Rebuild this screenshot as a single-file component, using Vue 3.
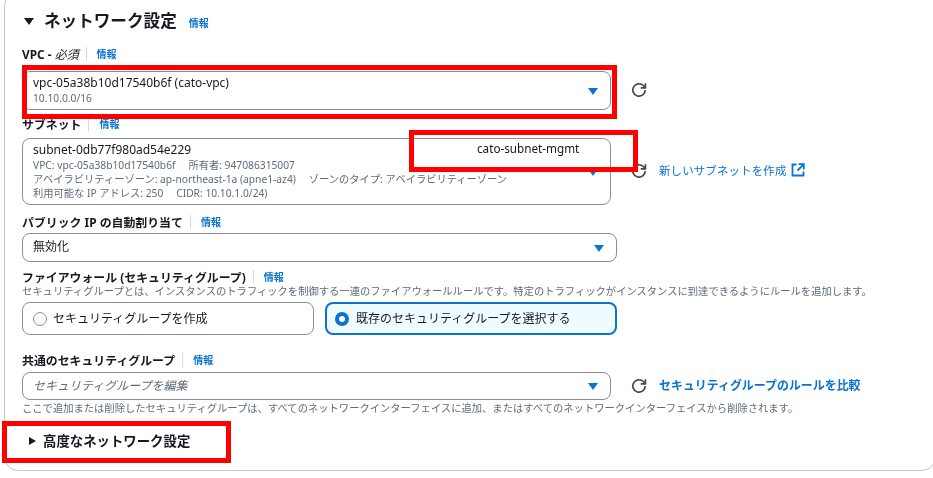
<script setup>
const subnetLines = [
  'VPC: vpc-05a38b10d17540b6f\u2003 所有者: 947086315007',
  'アベイラビリティーゾーン: ap-northeast-1a (apne1-az4)\u2003 ゾーンのタイプ: アベイラビリティーゾーン',
  '利用可能な IP アドレス: 250\u2003 CIDR: 10.10.1.0/24)'
]
const refreshArc = 'M14.2 8a6.2 6.2 0 1 1-1.9-4.5L14 5.2'
const refreshHead = 'M14.4 1.2v4.7H9.7'
</script>

<template>
  <div class="page">
    <section class="card">
      <header class="heading">
        <span class="tri-down"></span>
        <h2>ネットワーク設定</h2>
        <a class="info head-info">情報</a>
      </header>

      <div class="label vpc-label"><b>VPC - <i>必須</i></b><span class="sep"></span><a class="info">情報</a></div>
      <div class="row vpc-row">
        <div class="select vpc-select">
          <div class="main">vpc-05a38b10d17540b6f (cato-vpc)</div>
          <div class="sub">10.10.0.0/16</div>
          <span class="arrow"></span>
        </div>
        <svg class="refresh" viewBox="0 0 16 16"><path :d="refreshArc" /><path :d="refreshHead" /></svg>
      </div>

      <div class="label subnet-label"><b>サブネット</b><span class="sep"></span><a class="info">情報</a></div>
      <div class="row subnet-row">
        <div class="select subnet-select">
          <div class="main">subnet-0db77f980ad54e229</div>
          <div v-for="line in subnetLines" :key="line" class="sub">{{ line }}</div>
          <span class="arrow"></span>
        </div>
        <svg class="refresh" viewBox="0 0 16 16"><path :d="refreshArc" /><path :d="refreshHead" /></svg>
        <a class="link">新しいサブネットを作成
          <svg class="ext" viewBox="0 0 14 14"><path d="M5.5 1.5H1.5v11h11V8.5" /><path d="M7.5 1.2h5.3v5.3" /><path d="M12.5 1.5 6.5 7.5" /></svg>
        </a>
      </div>

      <div class="label ip-label"><b>パブリック IP の自動割り当て</b><span class="sep"></span><a class="info">情報</a></div>
      <div class="select ip-select">
        <div class="main">無効化</div>
        <span class="arrow"></span>
      </div>

      <div class="label fw-label"><b>ファイアウォール (セキュリティグループ)</b><span class="sep"></span><a class="info">情報</a></div>
      <p class="help fw-help">セキュリティグループとは、インスタンスのトラフィックを制御する一連のファイアウォールルールです。特定のトラフィックがインスタンスに到達できるようにルールを追加します。</p>
      <div class="radios">
        <div class="radio-card"><span class="radio"></span><span class="radio-text">セキュリティグループを作成</span></div>
        <div class="radio-card on"><span class="radio"></span><span class="radio-text">既存のセキュリティグループを選択する</span></div>
      </div>

      <div class="label sg-label"><b>共通のセキュリティグループ</b><span class="sep"></span><a class="info">情報</a></div>
      <div class="row sg-row">
        <div class="select sg-select">
          <div class="placeholder">セキュリティグループを編集</div>
          <span class="arrow"></span>
        </div>
        <svg class="refresh" viewBox="0 0 16 16"><path :d="refreshArc" /><path :d="refreshHead" /></svg>
        <a class="link strong">セキュリティグループのルールを比較</a>
      </div>
      <p class="help sg-help">ここで追加または削除したセキュリティグループは、すべてのネットワークインターフェイスに追加、またはすべてのネットワークインターフェイスから削除されます。</p>

      <div class="advanced"><span class="tri-right"></span><b>高度なネットワーク設定</b></div>
    </section>

    <div class="mark mark-vpc"></div>
    <div class="mark mark-subnet"></div>
    <div class="mark mark-adv"></div>
    <span class="subnet-name">cato-subnet-mgmt</span>
  </div>
</template>

<style>
html, body { margin: 0; background: #fff; overflow: hidden; }
</style>

<style scoped>
.page {
  position: relative;
  width: 933px;
  height: 478px;
  overflow: hidden;
  background: #fff;
  color: #16191f;
  font-family: "Noto Sans", "Noto Sans CJK JP", sans-serif;
  font-size: 11px;
  filter: blur(0.35px);
}
.card {
  box-sizing: border-box;
  width: 932px;
  height: 479px;
  margin: -8px 0 0 4px;
  padding: 19px 0 0 17px;
  border: 1px solid #c6c6cd;
  border-radius: 14px;
}
.heading { display: flex; align-items: center; height: 18px; margin-left: 2px; }
.heading h2 { margin: 0 0 0 10px; font-size: 16.6px; line-height: 18px; font-weight: 700; color: #16191f; }
.tri-down { width: 0; height: 0; margin-top: 1px; border-left: 5px solid transparent; border-right: 5px solid transparent; border-top: 7px solid #16191f; }
.head-info { margin-left: 12px; margin-top: 3px; }
.info { font-size: 10px; font-weight: 700; color: #0972d3; line-height: 16px; }
.label { display: flex; align-items: center; height: 16px; font-size: 11.9px; line-height: 16px; }
.label b { font-weight: 700; }
.label i { font-weight: 400; }
.sep { width: 1px; height: 14px; background: #d5dbdb; margin: 0 10px 0 7px; }
.vpc-label { margin-top: 16px; }
.subnet-label { margin-top: 6px; }
.ip-label { margin-top: 9px; }
.fw-label { margin-top: 7px; }
.sg-label { margin-top: 17px; }
.row { display: flex; align-items: center; }
.vpc-row { margin-top: 9px; }
.subnet-row { margin-top: 6px; }
.sg-row { margin-top: 4px; }
.select {
  position: relative;
  box-sizing: border-box;
  width: 589px;
  flex: none;
  padding: 0 0 0 10px;
  border: 1px solid #8c8c94;
  border-radius: 8px;
  background: #fff;
}
.vpc-select { height: 39px; padding-top: 3px; }
.subnet-select { height: 67px; padding-top: 3px; }
.ip-select { width: 595px; height: 29px; margin-top: 3px; padding-top: 5px; }
.sg-select { height: 28px; padding-top: 4px; }
.main { font-size: 12px; line-height: 16px; color: #16191f; }
.sub { font-size: 10.25px; line-height: 14px; color: #5f6b7a; white-space: pre; }
.vpc-select .sub { line-height: 15px; }
.placeholder { font-size: 12px; line-height: 18px; font-style: italic; color: #5f6b7a; }
.arrow {
  position: absolute;
  right: 12px;
  top: 50%;
  margin-top: -3px;
  width: 0;
  height: 0;
  border-left: 5px solid transparent;
  border-right: 5px solid transparent;
  border-top: 7px solid #0972d3;
}
.refresh {
  flex: none;
  width: 16px;
  height: 16px;
  margin: 0 0 1px 20px;
  fill: none;
  stroke: #424650;
  stroke-width: 1.7;
}
.link {
  display: inline-flex;
  align-items: center;
  margin: 0 0 3px 12px;
  font-size: 11.4px;
  color: #0972d3;
  letter-spacing: 0.2px;
  white-space: nowrap;
}
.link.strong { font-weight: 700; font-size: 11.95px; letter-spacing: 0; }
.ext { width: 14px; height: 14px; margin-left: 4px; fill: none; stroke: #0972d3; stroke-width: 1.8; }
.help { margin: 0; font-size: 10.3px; line-height: 12px; color: #5f6b7a; white-space: nowrap; }
.sg-help { margin-top: 2px; }
.radios { display: flex; gap: 11px; margin-top: 5px; }
.radio-card {
  box-sizing: border-box;
  width: 292px;
  height: 33px;
  display: flex;
  align-items: center;
  padding-left: 10px;
  border: 1px solid #8c8c94;
  border-radius: 8px;
  font-size: 12px;
  white-space: nowrap;
}
.radio-text { margin-top: -1px; }
.radio {
  box-sizing: border-box;
  width: 14px;
  height: 14px;
  margin-right: 6px;
  border: 1px solid #8c8c94;
  border-radius: 50%;
  background: #fff;
}
.radio-card.on { border: 2px solid #0972d3; background: #f0fbff; padding-left: 8px; }
.radio-card.on .radio { border: 4px solid #0972d3; margin-right: 7px; }
.advanced { display: flex; align-items: center; height: 16px; margin: 19px 0 0 7px; font-size: 13.4px; }
.advanced b { font-weight: 700; margin: -3px 0 0 7px; }
.tri-right { width: 0; height: 0; border-top: 4px solid transparent; border-bottom: 4px solid transparent; border-left: 7px solid #16191f; }
.mark { position: absolute; box-sizing: border-box; border: 5px solid #f00; }
.mark-vpc { left: 22px; top: 65px; width: 595px; height: 54px; }
.mark-subnet { left: 409px; top: 130px; width: 229px; height: 42px; }
.mark-adv { left: 2px; top: 421px; width: 229px; height: 42px; }
.subnet-name { position: absolute; left: 477px; top: 140px; font-size: 11.7px; line-height: 16px; color: #16191f; }
</style>
